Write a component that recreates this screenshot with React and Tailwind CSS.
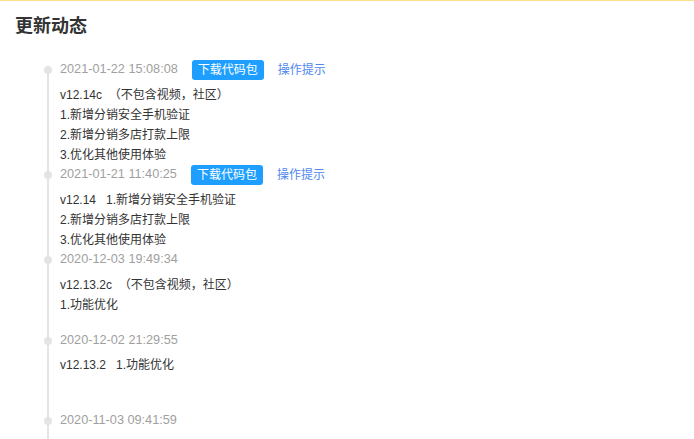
import React from "react";

const entries = [
  {
    ts: "2021-01-22 15:08:08",
    btn: true,
    lines: ["v12.14c  （不包含视频，社区）", "1.新增分销安全手机验证", "2.新增分销多店打款上限", "3.优化其他使用体验"],
    extra: "",
  },
  {
    ts: "2021-01-21 11:40:25",
    btn: true,
    lines: ["v12.14   1.新增分销安全手机验证", "2.新增分销多店打款上限", "3.优化其他使用体验"],
    extra: "",
  },
  {
    ts: "2020-12-03 19:49:34",
    btn: false,
    lines: ["v12.13.2c  （不包含视频，社区）", "1.功能优化"],
    extra: "mb-[16px]",
  },
  {
    ts: "2020-12-02 21:29:55",
    btn: false,
    lines: ["v12.13.2   1.功能优化"],
    extra: "mb-[36px]",
    tight: true,
  },
  {
    ts: "2020-11-03 09:41:59",
    btn: false,
    lines: [],
    extra: "",
  },
];

export default function App() {
  return (
    <div
      className="w-[694px] h-[439px] overflow-hidden bg-white border-t border-[#ffe08a]"
      style={{ fontFamily: '"Liberation Sans", "Noto Sans CJK SC", sans-serif' }}
    >
      <div className="pl-[15px] pt-[13px] text-[18px] leading-[24px] font-bold text-[#333]">更新动态</div>
      <div className="relative mt-[22px] ml-[44px]">
        <div className="absolute left-[3px] top-[6px] w-[2px] h-[400px] bg-[#e4e4e4]" />
        {entries.map((e, i) => (
          <div key={i} className={"relative pl-[16px] " + e.extra}>
            <div className="absolute left-0 top-[6px] w-[8px] h-[8px] rounded-full bg-[#e4e4e4]" />
            <div className="flex items-center h-[20px]">
              <span className="text-[12.7px] text-[#a0a0a0] whitespace-nowrap">{e.ts}</span>
              {e.btn && (
                <>
                  <span className="ml-[14px] h-[20px] px-[6px] rounded-[3px] bg-[#1e9fff] text-white text-[12px] leading-[20px] whitespace-nowrap">
                    下载代码包
                  </span>
                  <span className="ml-[14px] text-[12px] text-[#5088ee] whitespace-nowrap">操作提示</span>
                </>
              )}
            </div>
            {e.lines.length > 0 && (
              <div className={(e.tight ? "mt-[4px]" : "mt-[5px]") + " text-[12px] leading-[20px] text-[#333]"}>
                {e.lines.map((l, j) => (
                  <div key={j} className="whitespace-pre">{l}</div>
                ))}
              </div>
            )}
          </div>
        ))}
      </div>
    </div>
  );
}
